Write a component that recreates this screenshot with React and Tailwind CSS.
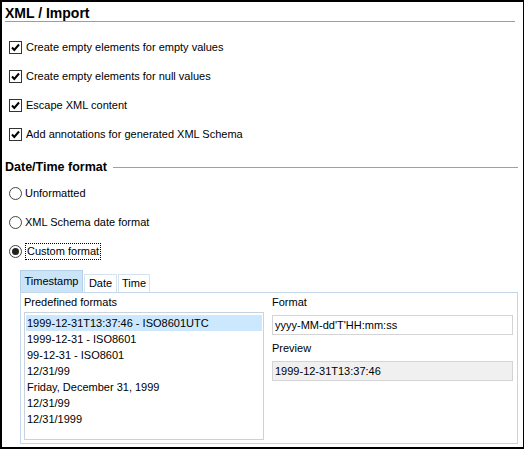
import React from "react";

const font = { fontFamily: '"Liberation Sans", Arial, sans-serif' };

function Check() {
  return (
    <span className="flex h-[13px] w-[13px] shrink-0 items-center justify-center border border-[#333333] bg-white">
      <svg width="11" height="11" viewBox="0 0 11 11">
        <path d="M2 5.5 L4.3 8 L9 2.5" fill="none" stroke="#000" strokeWidth="2" />
      </svg>
    </span>
  );
}

function Radio({ checked }) {
  return (
    <span className="flex h-[13px] w-[13px] shrink-0 items-center justify-center rounded-full border border-[#444444] bg-white">
      {checked && <span className="h-[7px] w-[7px] rounded-full bg-[#222222]" />}
    </span>
  );
}

const formats = [
  "1999-12-31T13:37:46 - ISO8601UTC",
  "1999-12-31 - ISO8601",
  "99-12-31 - ISO8601",
  "12/31/99",
  "Friday, December 31, 1999",
  "12/31/99",
  "12/31/1999",
];

export default function App() {
  const checks = [
    "Create empty elements for empty values",
    "Create empty elements for null values",
    "Escape XML content",
    "Add annotations for generated XML Schema",
  ];
  return (
    <div
      className="flex h-[449px] w-[524px] flex-col border-2 border-r border-black bg-white text-[11px] text-black"
      style={font}
    >
      <div className="ml-[3px] mr-[8px] h-[20px] border-b border-[#8aa1b6] pt-[4px] text-[14px] font-bold leading-[15px]">
        XML / Import
      </div>
      <div className="mt-[11px] flex flex-col">
        {checks.map((c) => (
          <div key={c} className="flex h-[29px] items-center gap-[4px] pl-[7px]">
            <Check />
            <span>{c}</span>
          </div>
        ))}
      </div>
      <div className="mt-[9px] flex h-[18px] items-center gap-[6px] pl-[3px] pr-[5px]">
        <span className="text-[12.5px] font-bold">Date/Time format</span>
        <span className="h-px flex-1 bg-[#a0a0a0]" />
      </div>
      <div className="mt-[3px] flex flex-col">
        <div className="flex h-[29px] items-center gap-[3px] pl-[7px]">
          <Radio />
          <span>Unformatted</span>
        </div>
        <div className="flex h-[29px] items-center gap-[3px] pl-[7px]">
          <Radio />
          <span>XML Schema date format</span>
        </div>
        <div className="flex h-[29px] items-center gap-[3px] pl-[7px]">
          <Radio checked />
          <span className="border border-dotted border-black px-px leading-[15px]">Custom format</span>
        </div>
      </div>
      <div className="ml-[18px] mt-[4px] flex h-[22px] items-end">
        <div className="flex h-[22px] w-[63px] items-center justify-center border border-b-0 border-[#b4cfe8] bg-[#cce4f7]">
          Timestamp
        </div>
        <div className="ml-px flex h-[18px] w-[33px] items-center justify-center border border-b-0 border-[#d5e3f0] bg-white">
          Date
        </div>
        <div className="ml-px flex h-[18px] w-[32px] items-center justify-center border border-b-0 border-[#d5e3f0] bg-white">
          Time
        </div>
      </div>
      <div className="ml-[18px] mr-[5px] flex h-[152px] gap-[8px] border border-[#c3d6ea] pl-[3px] pr-[4px]">
        <div className="flex w-[240px] flex-col">
          <div className="h-[18px] leading-[18px]">Predefined formats</div>
          <div className="mt-px h-[128px] border border-[#c9d3dd] bg-white px-px pt-[2px]">
            {formats.map((f, i) => (
              <div
                key={i}
                className={`h-[16px] pl-px leading-[16px] ${i === 0 ? "bg-[#cce8ff]" : ""}`}
              >
                {f}
              </div>
            ))}
          </div>
        </div>
        <div className="flex flex-1 flex-col">
          <div className="h-[18px] leading-[18px]">Format</div>
          <div className="mt-[4px] h-[20px] border border-[#d4d4d4] bg-white pl-[2px] leading-[18px]">
            yyyy-MM-dd'T'HH:mm:ss
          </div>
          <div className="mt-[4px] h-[18px] leading-[18px]">Preview</div>
          <div className="mt-[4px] h-[20px] border border-[#d4d4d4] bg-[#f0f0f0] pl-[2px] leading-[18px]">
            1999-12-31T13:37:46
          </div>
        </div>
      </div>
    </div>
  );
}
